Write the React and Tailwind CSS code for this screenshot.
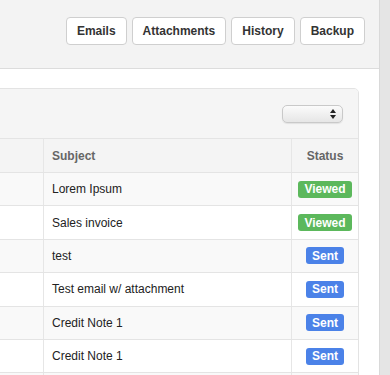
import React from "react";

const buttons = ["Emails", "Attachments", "History", "Backup"];

const rows = [
  { subject: "Lorem Ipsum", status: "Viewed" },
  { subject: "Sales invoice", status: "Viewed" },
  { subject: "test", status: "Sent" },
  { subject: "Test email w/ attachment", status: "Sent" },
  { subject: "Credit Note 1", status: "Sent" },
  { subject: "Credit Note 1", status: "Sent" },
  { subject: "", status: "" },
];

function StatusBadge({ status }) {
  if (!status) return null;
  const color = status === "Viewed" ? "bg-[#5cb85c]" : "bg-[#4b82e8]";
  return (
    <span
      className={`${color} inline-flex items-center h-[17px] px-[6px] rounded-[3px] text-white text-[12px] font-bold leading-none`}
    >
      {status}
    </span>
  );
}

function SelectBox() {
  return (
    <div className="w-[61px] h-[18px] rounded-[5px] border border-[#c9c9c9] bg-gradient-to-b from-[#fbfbfb] to-[#e6e6e6] shadow-[0_1px_1px_rgba(0,0,0,0.08)] flex items-center justify-end pr-[6px]">
      <svg width="6" height="10" viewBox="0 0 6 10">
        <path d="M3 0 L6 4 L0 4 Z" fill="#222" />
        <path d="M0 6 L6 6 L3 10 Z" fill="#222" />
      </svg>
    </div>
  );
}

export default function App() {
  return (
    <div
      className="w-[390px] h-[375px] overflow-hidden flex bg-white text-[#222]"
      style={{ fontFamily: '"Liberation Sans", Arial, sans-serif' }}
    >
      <div className="flex-1 flex flex-col min-w-0">
        {/* Header */}
        <div className="h-[69px] shrink-0 bg-[#f3f3f3] border-b border-[#dcdcdc] flex justify-end items-start gap-[5px] pt-[17px] pr-[14px]">
          {buttons.map((b) => (
            <button
              key={b}
              type="button"
              className="h-[28px] px-[10px] bg-white border border-[#cfcfcf] rounded-[4px] text-[12px] font-bold text-[#333]"
            >
              {b}
            </button>
          ))}
        </div>

        {/* Content */}
        <div className="flex-1 bg-white pt-[19px] pr-[20px]">
          <div className="-ml-px border border-[#e3e3e3] rounded-tr-[5px] overflow-hidden">
            <div className="h-[49px] bg-[#f5f5f5] flex items-center justify-end pr-[15px]">
              <SelectBox />
            </div>

            {/* Table header */}
            <div className="grid grid-cols-[44px_248px_1fr] h-[34px] bg-[#f4f4f4] border-t border-[#e4e4e4] text-[12px] font-bold text-[#666]">
              <div className="border-r border-[#e6e6e6]" />
              <div className="border-r border-[#e6e6e6] flex items-center pl-[8px]">Subject</div>
              <div className="flex items-center justify-center">Status</div>
            </div>

            {/* Rows */}
            {rows.map((r, i) => (
              <div
                key={i}
                className={`grid grid-cols-[44px_248px_1fr] h-[33.4px] border-t border-[#e4e4e4] text-[12px] ${
                  i % 2 === 0 ? "bg-[#f9f9f9]" : "bg-white"
                }`}
              >
                <div className="border-r border-[#e6e6e6]" />
                <div className="border-r border-[#e6e6e6] flex items-center pl-[8px] text-[#222]">
                  {r.subject}
                </div>
                <div className="flex items-center justify-center">
                  <StatusBadge status={r.status} />
                </div>
              </div>
            ))}
          </div>
        </div>
      </div>

      {/* Right strip */}
      <div className="w-[11px] shrink-0 bg-[#e5e5e5] border-l border-[#d9d9d9]" />
    </div>
  );
}
